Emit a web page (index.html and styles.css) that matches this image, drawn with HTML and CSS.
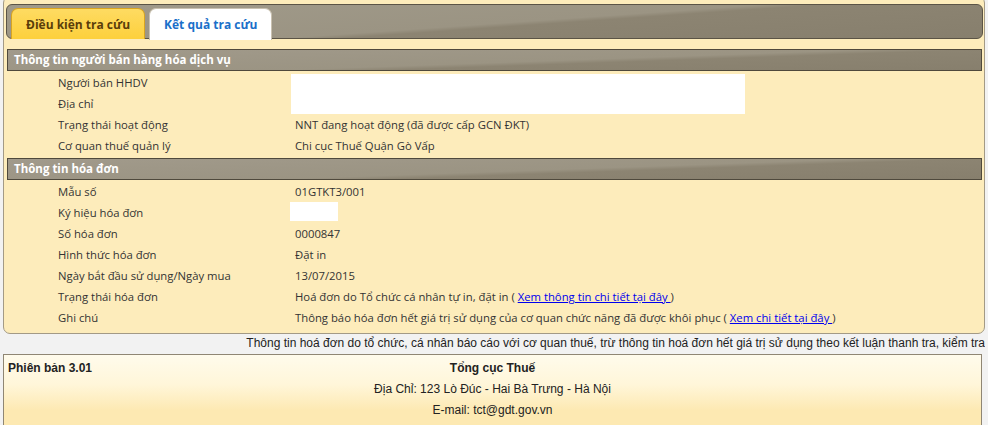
FILE: index.html
```html
<!DOCTYPE html>
<html lang="vi">
<head>
    <meta charset="UTF-8">
    <title>Tra cứu hóa đơn</title>
    <link rel="stylesheet" href="styles.css">
</head>
<body>
    <div class="widget">
        <div class="tab-bar">
            <div class="tab">Điều kiện tra cứu</div>
            <div class="tab active">Kết quả tra cứu</div>
        </div>

        <div class="panel">
            <div class="section-head">Thông tin người bán hàng hóa dịch vụ</div>
            <div class="rows">
                <!-- seller name and address share one masked cell -->
                <div class="row">
                    <div class="label">
                        <div>Người bán HHDV</div>
                        <div>Địa chỉ</div>
                    </div>
                    <div class="value"><div class="masked wide"></div></div>
                </div>
                <div class="row">
                    <div class="label">Trạng thái hoạt động</div>
                    <div class="value">NNT đang hoạt động (đã được cấp GCN ĐKT)</div>
                </div>
                <div class="row">
                    <div class="label">Cơ quan thuế quản lý</div>
                    <div class="value">Chi cục Thuế Quận Gò Vấp</div>
                </div>
            </div>

            <div class="section-head">Thông tin hóa đơn</div>
            <div class="rows">
                <div class="row">
                    <div class="label">Mẫu số</div>
                    <div class="value">01GTKT3/001</div>
                </div>
                <div class="row">
                    <div class="label">Ký hiệu hóa đơn</div>
                    <div class="value"><div class="masked small"></div></div>
                </div>
                <div class="row">
                    <div class="label">Số hóa đơn</div>
                    <div class="value">0000847</div>
                </div>
                <div class="row">
                    <div class="label">Hình thức hóa đơn</div>
                    <div class="value">Đặt in</div>
                </div>
                <div class="row">
                    <div class="label">Ngày bắt đầu sử dụng/Ngày mua</div>
                    <div class="value">13/07/2015</div>
                </div>
                <div class="row">
                    <div class="label">Trạng thái hóa đơn</div>
                    <div class="value">Hoá đơn do Tổ chức cá nhân tự in, đặt in ( <a href="#">Xem thông tin chi tiết tại đây </a>)</div>
                </div>
                <div class="row">
                    <div class="label">Ghi chú</div>
                    <div class="value">Thông báo hóa đơn hết giá trị sử dụng của cơ quan chức năng đã được khôi phục ( <a href="#">Xem chi tiết tại đây </a>)</div>
                </div>
            </div>
        </div>
    </div>

    <div class="note">Thông tin hoá đơn do tổ chức, cá nhân báo cáo với cơ quan thuế, trừ thông tin hoá đơn hết giá trị sử dụng theo kết luận thanh tra, kiểm tra</div>

    <div class="footer">
        <div class="footer-top">
            <div class="version">Phiên bản 3.01</div>
            <div class="agency">Tổng cục Thuế</div>
            <div></div>
        </div>
        <div>Địa Chỉ: 123 Lò Đúc - Hai Bà Trưng - Hà Nội</div>
        <div>E-mail: tct@gdt.gov.vn</div>
    </div>
</body>
</html>
```

FILE: styles.css
```css
* {
    box-sizing: border-box;
}
body {
    margin: 0;
    padding: 0 3px;
    background: #f2f2f2;
    font-family: "Open Sans", "Noto Sans", sans-serif;
    font-size: 11.3px;
    color: #333;
    overflow: hidden;
}
.widget {
    margin-top: -4px;
    background: #fdecbb;
    border: 1px solid #a39a86;
    border-radius: 7px;
    padding: 7px 1px 3px 2px;
    width: 982px;
}
.tab-bar {
    display: flex;
    gap: 4px;
    height: 35px;
    padding: 3px 0 0 4px;
    border: 1px solid #5b5446;
    border-radius: 6px;
    background: linear-gradient(176deg, #a09a8a 0%, #9b9483 52%, #8c8472 56%, #877f6d 100%);
    margin-bottom: 10px;
}
.tab {
    height: 31px;
    padding: 0 14px;
    display: flex;
    align-items: center;
    font-size: 12px;
    font-weight: bold;
    color: #5a3d0a;
    border: 1px solid #d9a520;
    border-bottom: none;
    border-radius: 7px 7px 0 0;
    background: linear-gradient(#fedb62, #fdd03c);
}
.tab.active {
    height: 32px;
    color: #1a6fc9;
    background: #fff;
    border-color: #c9c1b0;
}
.panel {
    margin: 0 1px;
}
.section-head {
    height: 22px;
    padding: 0 6px;
    line-height: 20px;
    font-size: 11.5px;
    font-weight: bold;
    color: #fff;
    border: 1px solid #4f493c;
    background: linear-gradient(178deg, #a19a8b 0%, #9b9483 55%, #8c8472 62%, #877f6d 100%);
}
.rows {
    padding: 1px 0 2px;
}
.row {
    display: flex;
    line-height: 21px;
    white-space: nowrap;
}
.label {
    width: 287px;
    flex-shrink: 0;
    padding-left: 51px;
}
.value {
    padding-left: 1px;
}
.masked {
    background: #fff;
}
.masked.wide {
    width: 454px;
    height: 40px;
    margin: 2px 0 0 -4px;
}
.masked.small {
    width: 48px;
    height: 19px;
    margin: 0 0 0 -5px;
}
a {
    color: #0000ee;
}
.note {
    font-family: "Liberation Sans", Arial, sans-serif;
    font-size: 12px;
    color: #222;
    text-align: right;
    white-space: nowrap;
    height: 20px;
    line-height: 18px;
    margin-left: -300px;
    overflow: hidden;
}
.footer {
    width: 979px;
    border: 1px solid #8f8674;
    background: linear-gradient(#fffbec 0%, #fff6d9 40%, #fde9b2 75%, #fde9b2 100%);
    padding: 3px 4px 8px;
    font-family: "Liberation Sans", Arial, sans-serif;
    font-size: 12px;
    color: #222;
    text-align: center;
    line-height: 21px;
}
.footer-top {
    display: grid;
    grid-template-columns: 1fr auto 1fr;
    font-weight: bold;
}
.version {
    text-align: left;
}
```
